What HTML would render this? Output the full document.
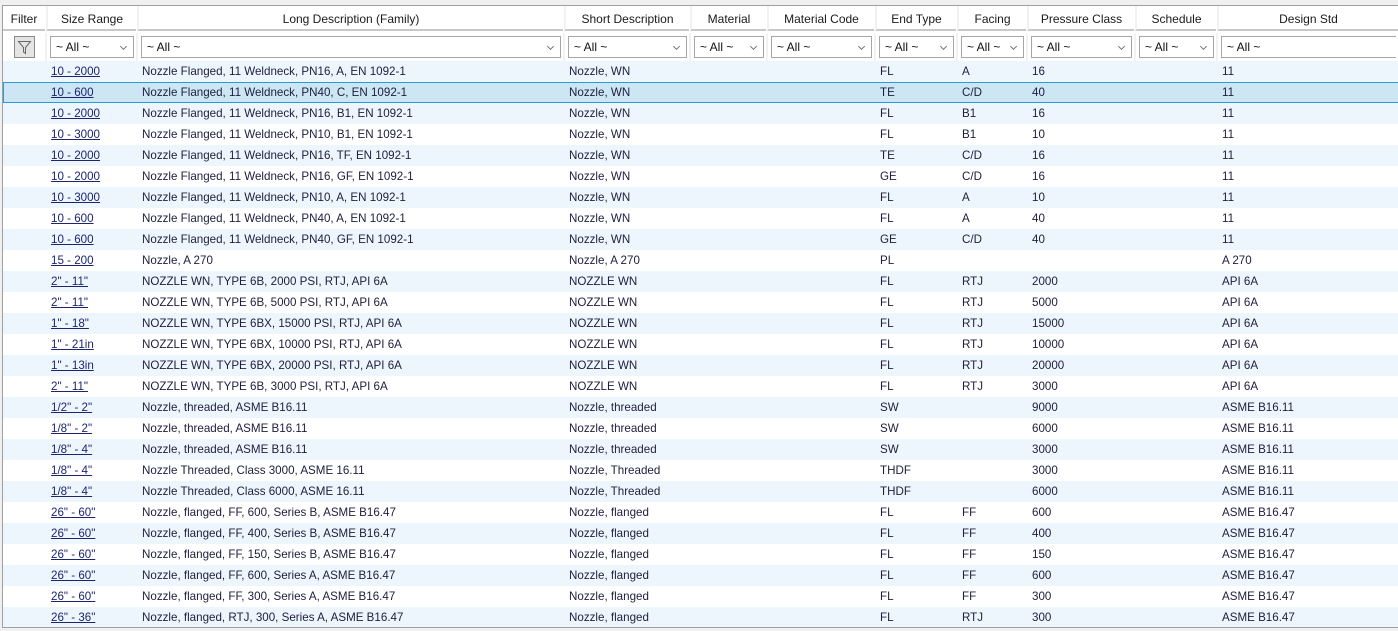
<!DOCTYPE html>
<html><head><meta charset="utf-8"><style>
*{box-sizing:border-box;margin:0;padding:0}
body{width:1398px;height:631px;background:#f0f0f0;font-family:"Liberation Sans",sans-serif;font-size:11.6px;color:#1e1e3c;overflow:hidden;position:relative}
#grid{position:absolute;left:2px;top:5px;width:1396px;height:623px;background:#fff;border-top:1px solid #a0a0a0;border-left:1px solid #a0a0a0;border-bottom:1px solid #a0a0a0;overflow:hidden}
#body{position:absolute;left:0;top:-1px;width:1396px;height:640px}
.r{position:absolute;left:0;height:21px;width:1396px;display:flex;align-items:center;white-space:nowrap}
.c{flex:none;overflow:hidden;padding-left:6px}
.w0{width:42px}.w1{width:91px}.w2{width:427px}.w3{width:126px}.w4{width:77px}.w5{width:108px}.w6{width:82px}.w7{width:70px}.w8{width:108px}.w9{width:82px}.w10{width:182px}
.hd{top:0;height:25px;color:#1a1a1a;font-size:12px}
.hd .c{text-align:center;padding:0;height:25px;line-height:26px;border-left:2px solid #f2f2f2;border-bottom:2px solid #c8c8c8;margin-left:1px}
.hd .c:first-child{border-left:none;margin-left:0}
.fr{top:27px;height:28px;font-size:12px}
.fr .c{padding:3px 2px 3px 3px;height:28px;border-left:2px solid #f2f2f2}
.fr .c:first-child{border-left:none}
.cb{height:22px;border:1px solid #a6a6a6;background:#fff;position:relative;line-height:20px;padding-left:5px;color:#111}
.cb:after{content:"";position:absolute;right:7px;top:7px;width:4px;height:4px;border-right:1px solid #777;border-bottom:1px solid #777;transform:rotate(45deg)}
.cb.n:after{display:none}
.fb{margin:0 auto;width:21px;height:22px;border:1px solid #8a8a8a;background:#e4e4e4;position:relative}
.a{background:#eef6fd}
.sel{background:#cce6f4;box-shadow:inset 1px 1px 0 #2b9ad6,inset 0 -1px 0 #2b9ad6}
u{color:#1c2670;text-decoration-color:#1c2670}
</style></head><body>
<div id="grid">
<div class="r hd"><div class="c w0">Filter</div><div class="c w1" style="width:90px">Size Range</div><div class="c w2" style="width:426px">Long Description (Family)</div><div class="c w3" style="width:125px">Short Description</div><div class="c w4" style="width:76px">Material</div><div class="c w5" style="width:107px">Material Code</div><div class="c w6" style="width:81px">End Type</div><div class="c w7" style="width:69px">Facing</div><div class="c w8" style="width:107px">Pressure Class</div><div class="c w9" style="width:81px">Schedule</div><div class="c w10" style="width:181px">Design Std</div></div>
<div class="r fr"><div class="c w0" style="padding:3px 0"><div class="fb"><svg width="19" height="20" viewBox="0 0 19 20" style="position:absolute;left:0;top:0"><path d="M3.5 4.5h12l-5 6v6l-2-1.5v-4.5z" fill="none" stroke="#666" stroke-width="1"/></svg></div></div><div class="c w1"><div class="cb">~ All ~</div></div><div class="c w2"><div class="cb">~ All ~</div></div><div class="c w3"><div class="cb">~ All ~</div></div><div class="c w4"><div class="cb">~ All ~</div></div><div class="c w5"><div class="cb">~ All ~</div></div><div class="c w6"><div class="cb">~ All ~</div></div><div class="c w7"><div class="cb">~ All ~</div></div><div class="c w8"><div class="cb">~ All ~</div></div><div class="c w9"><div class="cb">~ All ~</div></div><div class="c w10"><div class="cb n" style="border-right:none">~ All ~</div></div></div>
<div id="body">
<div class="r a" style="top:56px"><div class="c w0"></div><div class="c w1"><u>10 - 2000</u></div><div class="c w2">Nozzle Flanged, 11 Weldneck, PN16, A, EN 1092-1</div><div class="c w3">Nozzle, WN</div><div class="c w4"></div><div class="c w5"></div><div class="c w6">FL</div><div class="c w7">A</div><div class="c w8">16</div><div class="c w9"></div><div class="c w10">11</div></div>
<div class="r sel" style="top:77px"><div class="c w0"></div><div class="c w1"><u>10 - 600</u></div><div class="c w2">Nozzle Flanged, 11 Weldneck, PN40, C, EN 1092-1</div><div class="c w3">Nozzle, WN</div><div class="c w4"></div><div class="c w5"></div><div class="c w6">TE</div><div class="c w7">C/D</div><div class="c w8">40</div><div class="c w9"></div><div class="c w10">11</div></div>
<div class="r a" style="top:98px"><div class="c w0"></div><div class="c w1"><u>10 - 2000</u></div><div class="c w2">Nozzle Flanged, 11 Weldneck, PN16, B1, EN 1092-1</div><div class="c w3">Nozzle, WN</div><div class="c w4"></div><div class="c w5"></div><div class="c w6">FL</div><div class="c w7">B1</div><div class="c w8">16</div><div class="c w9"></div><div class="c w10">11</div></div>
<div class="r" style="top:119px"><div class="c w0"></div><div class="c w1"><u>10 - 3000</u></div><div class="c w2">Nozzle Flanged, 11 Weldneck, PN10, B1, EN 1092-1</div><div class="c w3">Nozzle, WN</div><div class="c w4"></div><div class="c w5"></div><div class="c w6">FL</div><div class="c w7">B1</div><div class="c w8">10</div><div class="c w9"></div><div class="c w10">11</div></div>
<div class="r a" style="top:140px"><div class="c w0"></div><div class="c w1"><u>10 - 2000</u></div><div class="c w2">Nozzle Flanged, 11 Weldneck, PN16, TF, EN 1092-1</div><div class="c w3">Nozzle, WN</div><div class="c w4"></div><div class="c w5"></div><div class="c w6">TE</div><div class="c w7">C/D</div><div class="c w8">16</div><div class="c w9"></div><div class="c w10">11</div></div>
<div class="r" style="top:161px"><div class="c w0"></div><div class="c w1"><u>10 - 2000</u></div><div class="c w2">Nozzle Flanged, 11 Weldneck, PN16, GF, EN 1092-1</div><div class="c w3">Nozzle, WN</div><div class="c w4"></div><div class="c w5"></div><div class="c w6">GE</div><div class="c w7">C/D</div><div class="c w8">16</div><div class="c w9"></div><div class="c w10">11</div></div>
<div class="r a" style="top:182px"><div class="c w0"></div><div class="c w1"><u>10 - 3000</u></div><div class="c w2">Nozzle Flanged, 11 Weldneck, PN10, A, EN 1092-1</div><div class="c w3">Nozzle, WN</div><div class="c w4"></div><div class="c w5"></div><div class="c w6">FL</div><div class="c w7">A</div><div class="c w8">10</div><div class="c w9"></div><div class="c w10">11</div></div>
<div class="r" style="top:203px"><div class="c w0"></div><div class="c w1"><u>10 - 600</u></div><div class="c w2">Nozzle Flanged, 11 Weldneck, PN40, A, EN 1092-1</div><div class="c w3">Nozzle, WN</div><div class="c w4"></div><div class="c w5"></div><div class="c w6">FL</div><div class="c w7">A</div><div class="c w8">40</div><div class="c w9"></div><div class="c w10">11</div></div>
<div class="r a" style="top:224px"><div class="c w0"></div><div class="c w1"><u>10 - 600</u></div><div class="c w2">Nozzle Flanged, 11 Weldneck, PN40, GF, EN 1092-1</div><div class="c w3">Nozzle, WN</div><div class="c w4"></div><div class="c w5"></div><div class="c w6">GE</div><div class="c w7">C/D</div><div class="c w8">40</div><div class="c w9"></div><div class="c w10">11</div></div>
<div class="r" style="top:245px"><div class="c w0"></div><div class="c w1"><u>15 - 200</u></div><div class="c w2">Nozzle, A 270</div><div class="c w3">Nozzle, A 270</div><div class="c w4"></div><div class="c w5"></div><div class="c w6">PL</div><div class="c w7"></div><div class="c w8"></div><div class="c w9"></div><div class="c w10">A 270</div></div>
<div class="r a" style="top:266px"><div class="c w0"></div><div class="c w1"><u>2" - 11"</u></div><div class="c w2">NOZZLE WN, TYPE 6B, 2000 PSI, RTJ, API 6A</div><div class="c w3">NOZZLE WN</div><div class="c w4"></div><div class="c w5"></div><div class="c w6">FL</div><div class="c w7">RTJ</div><div class="c w8">2000</div><div class="c w9"></div><div class="c w10">API 6A</div></div>
<div class="r" style="top:287px"><div class="c w0"></div><div class="c w1"><u>2" - 11"</u></div><div class="c w2">NOZZLE WN, TYPE 6B, 5000 PSI, RTJ, API 6A</div><div class="c w3">NOZZLE WN</div><div class="c w4"></div><div class="c w5"></div><div class="c w6">FL</div><div class="c w7">RTJ</div><div class="c w8">5000</div><div class="c w9"></div><div class="c w10">API 6A</div></div>
<div class="r a" style="top:308px"><div class="c w0"></div><div class="c w1"><u>1" - 18"</u></div><div class="c w2">NOZZLE WN, TYPE 6BX, 15000 PSI, RTJ, API 6A</div><div class="c w3">NOZZLE WN</div><div class="c w4"></div><div class="c w5"></div><div class="c w6">FL</div><div class="c w7">RTJ</div><div class="c w8">15000</div><div class="c w9"></div><div class="c w10">API 6A</div></div>
<div class="r" style="top:329px"><div class="c w0"></div><div class="c w1"><u>1" - 21in</u></div><div class="c w2">NOZZLE WN, TYPE 6BX, 10000 PSI, RTJ, API 6A</div><div class="c w3">NOZZLE WN</div><div class="c w4"></div><div class="c w5"></div><div class="c w6">FL</div><div class="c w7">RTJ</div><div class="c w8">10000</div><div class="c w9"></div><div class="c w10">API 6A</div></div>
<div class="r a" style="top:350px"><div class="c w0"></div><div class="c w1"><u>1" - 13in</u></div><div class="c w2">NOZZLE WN, TYPE 6BX, 20000 PSI, RTJ, API 6A</div><div class="c w3">NOZZLE WN</div><div class="c w4"></div><div class="c w5"></div><div class="c w6">FL</div><div class="c w7">RTJ</div><div class="c w8">20000</div><div class="c w9"></div><div class="c w10">API 6A</div></div>
<div class="r" style="top:371px"><div class="c w0"></div><div class="c w1"><u>2" - 11"</u></div><div class="c w2">NOZZLE WN, TYPE 6B, 3000 PSI, RTJ, API 6A</div><div class="c w3">NOZZLE WN</div><div class="c w4"></div><div class="c w5"></div><div class="c w6">FL</div><div class="c w7">RTJ</div><div class="c w8">3000</div><div class="c w9"></div><div class="c w10">API 6A</div></div>
<div class="r a" style="top:392px"><div class="c w0"></div><div class="c w1"><u>1/2" - 2"</u></div><div class="c w2">Nozzle, threaded, ASME B16.11</div><div class="c w3">Nozzle, threaded</div><div class="c w4"></div><div class="c w5"></div><div class="c w6">SW</div><div class="c w7"></div><div class="c w8">9000</div><div class="c w9"></div><div class="c w10">ASME B16.11</div></div>
<div class="r" style="top:413px"><div class="c w0"></div><div class="c w1"><u>1/8" - 2"</u></div><div class="c w2">Nozzle, threaded, ASME B16.11</div><div class="c w3">Nozzle, threaded</div><div class="c w4"></div><div class="c w5"></div><div class="c w6">SW</div><div class="c w7"></div><div class="c w8">6000</div><div class="c w9"></div><div class="c w10">ASME B16.11</div></div>
<div class="r a" style="top:434px"><div class="c w0"></div><div class="c w1"><u>1/8" - 4"</u></div><div class="c w2">Nozzle, threaded, ASME B16.11</div><div class="c w3">Nozzle, threaded</div><div class="c w4"></div><div class="c w5"></div><div class="c w6">SW</div><div class="c w7"></div><div class="c w8">3000</div><div class="c w9"></div><div class="c w10">ASME B16.11</div></div>
<div class="r" style="top:455px"><div class="c w0"></div><div class="c w1"><u>1/8" - 4"</u></div><div class="c w2">Nozzle Threaded, Class 3000, ASME 16.11</div><div class="c w3">Nozzle, Threaded</div><div class="c w4"></div><div class="c w5"></div><div class="c w6">THDF</div><div class="c w7"></div><div class="c w8">3000</div><div class="c w9"></div><div class="c w10">ASME B16.11</div></div>
<div class="r a" style="top:476px"><div class="c w0"></div><div class="c w1"><u>1/8" - 4"</u></div><div class="c w2">Nozzle Threaded, Class 6000, ASME 16.11</div><div class="c w3">Nozzle, Threaded</div><div class="c w4"></div><div class="c w5"></div><div class="c w6">THDF</div><div class="c w7"></div><div class="c w8">6000</div><div class="c w9"></div><div class="c w10">ASME B16.11</div></div>
<div class="r" style="top:497px"><div class="c w0"></div><div class="c w1"><u>26" - 60"</u></div><div class="c w2">Nozzle, flanged, FF, 600, Series B, ASME B16.47</div><div class="c w3">Nozzle, flanged</div><div class="c w4"></div><div class="c w5"></div><div class="c w6">FL</div><div class="c w7">FF</div><div class="c w8">600</div><div class="c w9"></div><div class="c w10">ASME B16.47</div></div>
<div class="r a" style="top:518px"><div class="c w0"></div><div class="c w1"><u>26" - 60"</u></div><div class="c w2">Nozzle, flanged, FF, 400, Series B, ASME B16.47</div><div class="c w3">Nozzle, flanged</div><div class="c w4"></div><div class="c w5"></div><div class="c w6">FL</div><div class="c w7">FF</div><div class="c w8">400</div><div class="c w9"></div><div class="c w10">ASME B16.47</div></div>
<div class="r" style="top:539px"><div class="c w0"></div><div class="c w1"><u>26" - 60"</u></div><div class="c w2">Nozzle, flanged, FF, 150, Series B, ASME B16.47</div><div class="c w3">Nozzle, flanged</div><div class="c w4"></div><div class="c w5"></div><div class="c w6">FL</div><div class="c w7">FF</div><div class="c w8">150</div><div class="c w9"></div><div class="c w10">ASME B16.47</div></div>
<div class="r a" style="top:560px"><div class="c w0"></div><div class="c w1"><u>26" - 60"</u></div><div class="c w2">Nozzle, flanged, FF, 600, Series A, ASME B16.47</div><div class="c w3">Nozzle, flanged</div><div class="c w4"></div><div class="c w5"></div><div class="c w6">FL</div><div class="c w7">FF</div><div class="c w8">600</div><div class="c w9"></div><div class="c w10">ASME B16.47</div></div>
<div class="r" style="top:581px"><div class="c w0"></div><div class="c w1"><u>26" - 60"</u></div><div class="c w2">Nozzle, flanged, FF, 300, Series A, ASME B16.47</div><div class="c w3">Nozzle, flanged</div><div class="c w4"></div><div class="c w5"></div><div class="c w6">FL</div><div class="c w7">FF</div><div class="c w8">300</div><div class="c w9"></div><div class="c w10">ASME B16.47</div></div>
<div class="r a" style="top:602px"><div class="c w0"></div><div class="c w1"><u>26" - 36"</u></div><div class="c w2">Nozzle, flanged, RTJ, 300, Series A, ASME B16.47</div><div class="c w3">Nozzle, flanged</div><div class="c w4"></div><div class="c w5"></div><div class="c w6">FL</div><div class="c w7">RTJ</div><div class="c w8">300</div><div class="c w9"></div><div class="c w10">ASME B16.47</div></div>
</div>
</div>
</body></html>
